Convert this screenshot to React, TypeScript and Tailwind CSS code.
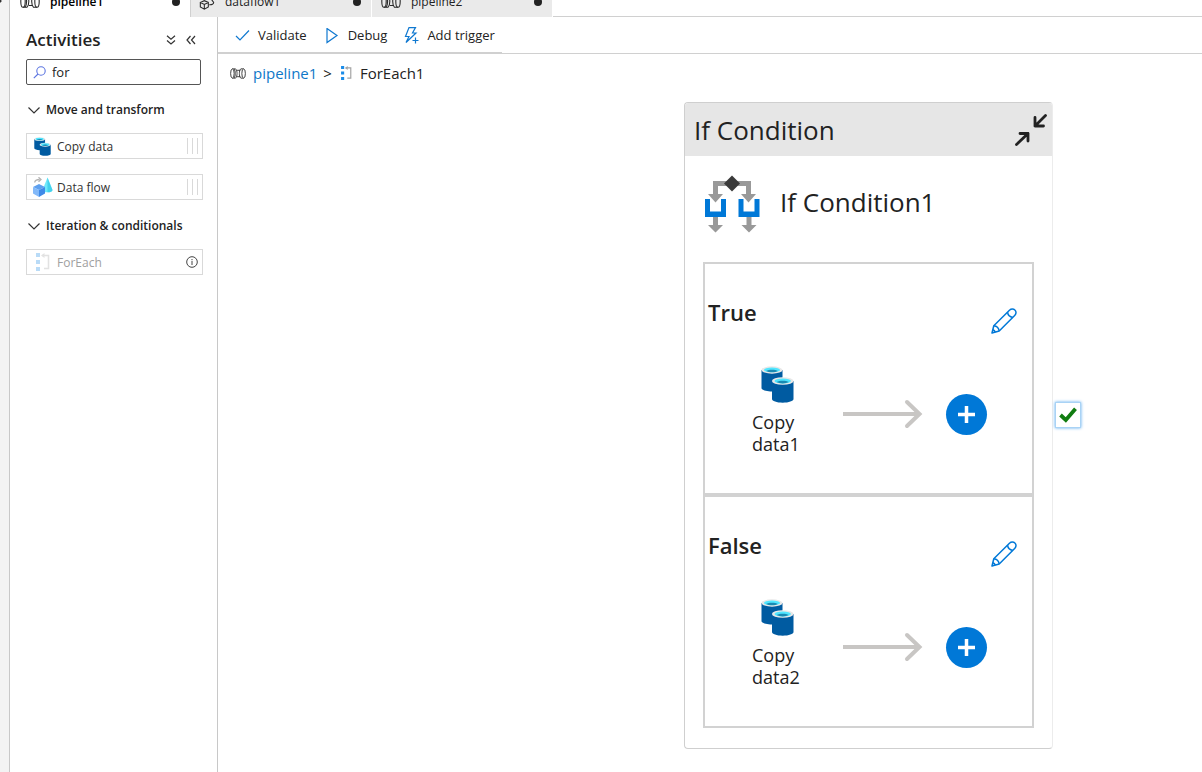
import React, { useState } from "react";

type IconProps = { className?: string };

function PipelineIcon({ className }: IconProps) {
  return (
    <svg viewBox="0 0 20 13" className={className} fill="none" stroke="#2b2b2b" strokeWidth="1.100" aria-hidden="true">
      <path d="M3 .7h4M3 12.300h4" />
      <ellipse cx="3" cy="6.500" rx="2.200" ry="5.800" />
      <path d="M5 .9C6.300 2.300 6.600 4.300 6.600 6.500S6.300 10.700 5 12.100M7 .7c1.400 1.500 1.800 3.500 1.800 5.800S8.400 10.800 7 12.300" />
      <path d="M8.800 2.500h4M8.800 10.500h4" />
      <path d="M17 .7h-3.500c-1.400 1.500-1.800 3.500-1.800 5.800s.4 4.300 1.800 5.800H17" />
      <ellipse cx="17" cy="6.500" rx="2.200" ry="5.800" />
    </svg>
  );
}

function DataflowTabIcon({ className }: IconProps) {
  return (
    <svg viewBox="0 0 18 18" className={className} fill="none" stroke="#2b2b2b" strokeWidth="1.200" aria-hidden="true">
      <path d="M1.500 9.500l4.500-2 4.500 2v5L6 17l-4.500-2.500zM1.500 9.500L6 11.800l4.500-2.300M6 11.800V17" />
      <path d="M11 2l5.500 7.500c0 1.800-2 2.700-5 2.500" />
      <path d="M2 5c.5-2 2-3 4-3M4.500.5L6.500 2l-2 1.800" />
    </svg>
  );
}

function ForEachIcon({ className }: IconProps) {
  return (
    <svg viewBox="0 0 14 18" className={className} aria-hidden="true">
      <path fill="#1a8ce8" d="M0 0h4v4H0zM0 7h4v4H0zM0 14h4v4H0z" />
      <path fill="none" stroke="#a3a3a3" strokeWidth="1.500" d="M6 2.500h6.500v13H8" />
      <path fill="#a3a3a3" d="M5 2.500L8.500 0v5z" />
    </svg>
  );
}

function CopyDataIcon({ className }: IconProps) {
  return (
    <svg viewBox="0 0 33 37" className={className} aria-hidden="true">
      <path fill="#005ba1" d="M.5 4v18c0 2 4.700 3.600 10.500 3.600S21.500 24 21.500 22V4z" />
      <ellipse cx="11" cy="4" rx="10.500" ry="3.700" fill="#e8e8e8" />
      <ellipse cx="11" cy="3.900" rx="8" ry="2.400" fill="#50e6ff" />
      <path fill="#198ab3" d="M5 5c1.600-1 3.600-1.300 6-1.300s4.400.3 6 1.300c-1.500.8-3.500 1.300-6 1.300S6.500 5.800 5 5z" />
      <path fill="#005ba1" d="M11 15v18c0 2 4.700 3.700 10.700 3.700S32.500 35 32.500 33V15z" />
      <ellipse cx="21.700" cy="15" rx="10.800" ry="3.800" fill="#e8e8e8" />
      <ellipse cx="21.700" cy="14.900" rx="8.200" ry="2.500" fill="#50e6ff" />
      <path fill="#198ab3" d="M15.600 16c1.600-1 3.700-1.300 6.100-1.300s4.500.3 6.100 1.300c-1.600.9-3.600 1.400-6.100 1.400s-4.500-.5-6.100-1.400z" />
    </svg>
  );
}

function DataFlowIcon({ className }: IconProps) {
  return (
    <svg viewBox="0 0 20 20" className={className} aria-hidden="true">
      <path fill="#6fe9fb" d="M14.500.5L9.500 13c0 1.500 2.200 2.300 5 2.300s5-.8 5-2.300z" />
      <path fill="#32c8e6" fillOpacity=".7" d="M14.500.5v14.800c2.800 0 5-.8 5-2.300z" />
      <path fill="#5ea0ef" d="M0 10l6-3 6 3-6 3z" />
      <path fill="#83b9f9" d="M0 10l6 3v7l-6-3.400z" />
      <path fill="#3f8ae8" d="M12 10l-6 3v7l6-3.400z" />
      <path fill="none" stroke="#b3b3b3" strokeWidth="1.300" d="M1.700 5.500c.2-2 1.500-3 5-3" />
      <path fill="none" stroke="#b3b3b3" strokeWidth="1.300" d="M5.500.3L8 2.500 5.500 4.700" />
    </svg>
  );
}

function IfConditionIcon({ className }: IconProps) {
  return (
    <svg viewBox="0 0 56 58" className={className} aria-hidden="true">
      <path fill="#999" d="M9 6h38v13h5l-7.500 8.500L37 19h5v-8H14v8h5l-7.500 8.500L4 19h5z" />
      <path fill="#3a3a3a" d="M28 .5l8 8-8 8-8-8z" />
      <path fill="#0078d7" d="M1 24h5v12.500h11V24h5v18H1zM34.500 24h5v12.500h11V24h5v18h-21z" />
      <path fill="#999" d="M9 42h5v8h5l-7.500 7.500L4 50h5zM42.500 42h5v8h5L45 57.500 37.500 50h5z" />
    </svg>
  );
}

function PencilIcon({ className }: IconProps) {
  return (
    <svg viewBox="0 0 26 26" className={className} fill="none" stroke="#0078d7" strokeWidth="1.500" strokeLinejoin="round" aria-hidden="true">
      <path d="M1 25l1.800-7.200L18.700 2a3.600 3.600 0 0 1 5.200 0 3.600 3.600 0 0 1 0 5.200L8.200 23z" />
      <path d="M16.500 4.200c.4 2.800 2.200 4.800 5.300 5.300M2.800 17.800c3 .3 4.900 2.200 5.400 5.200M1.800 21.700c1.300.4 2.100 1.200 2.500 2.500" />
    </svg>
  );
}

function Chevron({ className }: IconProps) {
  return (
    <svg viewBox="0 0 12 7" className={className} fill="none" stroke="#333" strokeWidth="1.200" aria-hidden="true">
      <path d="M.5.5L6 6 11.500.5" />
    </svg>
  );
}

function Grip() {
  return (
    <span className="flex h-4 w-[11px] justify-between" aria-hidden="true">
      <span className="w-px bg-[#d9d9d9]" />
      <span className="w-px bg-[#d9d9d9]" />
      <span className="w-px bg-[#d9d9d9]" />
    </span>
  );
}

function Tab({ label, icon, active }: { label: string; icon: React.ReactNode; active?: boolean }) {
  return (
    <button
      type="button"
      role="tab"
      aria-selected={!!active}
      className={
        active
          ? "flex h-[31px] w-[181px] items-center border-r border-[#d0d0d0] bg-white pl-[10px] pr-[10px] text-xs font-semibold text-black"
          : "flex h-[31px] w-[181px] items-center border-r border-white bg-[#eaeaea] pl-2 pr-[10px] text-xs text-[#222]"
      }
    >
      {icon}
      <span className="ml-[10px]">{label}</span>
      <span className="ml-auto size-2 rounded-full bg-[#222]" />
    </button>
  );
}

function Section({ title, children }: { title: string; children: React.ReactNode }) {
  return (
    <section>
      <h2>
        <button type="button" aria-expanded="true" className="flex h-6 items-center gap-[6px] pl-[2px] text-xs font-semibold text-[#222]">
          <Chevron className="h-[7px] w-3" />
          {title}
        </button>
      </h2>
      <div className="mt-[11px] flex flex-col gap-[15px]">{children}</div>
    </section>
  );
}

function Activity({ label, icon, trailing, disabled }: { label: string; icon: React.ReactNode; trailing: React.ReactNode; disabled?: boolean }) {
  return (
    <button
      type="button"
      disabled={disabled}
      className="flex h-[26px] w-[177px] items-center border border-[#d9d9d9] bg-white pl-[5px] pr-1 text-xs text-[#333] disabled:text-[#a0a0a0]"
    >
      <span className="flex w-[21px] justify-center">{icon}</span>
      <span className="ml-1 pt-px">{label}</span>
      <span className="ml-auto">{trailing}</span>
    </button>
  );
}

function Branch({ title, activity }: { title: string; activity: [string, string] }) {
  return (
    <section className="h-[233px] border-2 border-[#d2d2d2] pt-8">
      <div className="flex h-[38px] items-start justify-between pl-[3px] pr-[15px]">
        <h3 className="text-[22px] leading-8 font-semibold text-[#222]">{title}</h3>
        <button type="button" aria-label={`Edit ${title} activities`} className="self-end">
          <PencilIcon className="size-[26px]" />
        </button>
      </div>
      <div className="mt-8 flex items-center pl-[47px] pr-[45px]">
        <div className="flex w-[51px] flex-col items-center gap-2">
          <CopyDataIcon className="h-[37px] w-[33px]" />
          <p className="w-full text-lg leading-[22px] text-[#222]">
            {activity[0]}
            <br />
            {activity[1]}
          </p>
        </div>
        <svg viewBox="0 0 80 30" className="mt-[6px] ml-10 h-[30px] w-20" fill="none" stroke="#c8c6c4" strokeWidth="4" aria-hidden="true">
          <path d="M0 15h76" />
          <path strokeLinecap="round" d="M64 3l12.500 12L64 27" />
        </svg>
        <button type="button" aria-label={`Add activity to ${title}`} className="mt-2 ml-auto flex size-[41px] items-center justify-center rounded-full bg-[#0078d7]">
          <svg viewBox="0 0 17 17" className="size-[17px]" stroke="#fff" strokeWidth="3.500" aria-hidden="true">
            <path d="M8.500 0v17M0 8.500h17" />
          </svg>
        </button>
      </div>
    </section>
  );
}

export default function App() {
  const [query, setQuery] = useState("for");

  return (
    <div className="flex min-h-screen bg-white font-['Open_Sans','Noto_Sans',sans-serif] text-[#222]">
      <div className="w-[10px] shrink-0 overflow-hidden border-r border-[#c8c8c8] bg-[#f3f3f3]">
        <svg viewBox="0 0 6 10" className="-mt-1 h-[10px] w-[6px] -translate-x-1" fill="none" stroke="#333" strokeWidth="1.300" aria-hidden="true">
          <path d="M1 1l4 4-4 4" />
        </svg>
      </div>

      <div className="flex min-w-0 flex-1 flex-col">
        <header role="tablist" className="flex h-[17px] items-end overflow-hidden">
          <Tab active label="pipeline1" icon={<PipelineIcon className="h-[13px] w-5" />} />
          <Tab label="dataflow1" icon={<DataflowTabIcon className="size-4" />} />
          <Tab label="pipeline2" icon={<PipelineIcon className="ml-px h-[13px] w-5" />} />
          <div className="h-full flex-1 border-b border-[#d0d0d0]" />
        </header>

        <div className="flex flex-1">
          <aside className="w-[208px] shrink-0 border-r border-[#c8c8c8] pl-4">
            <div className="flex h-[42px] items-center pt-1 pr-[21px]">
              <h1 className="text-[17px] leading-6 font-semibold">Activities</h1>
              <button type="button" aria-label="Expand all" className="ml-auto">
                <svg viewBox="0 0 10 10" className="size-[10px]" fill="none" stroke="#333" strokeWidth="1.200" aria-hidden="true">
                  <path d="M1 .8l4 3.500L9 .8M1 5.500L5 9l4-3.500" />
                </svg>
              </button>
              <button type="button" aria-label="Collapse panel" className="ml-[10px]">
                <svg viewBox="0 0 10 10" className="size-[10px]" fill="none" stroke="#333" strokeWidth="1.200" aria-hidden="true">
                  <path d="M4.500 1L1 5l3.500 4M9 1L5.500 5 9 9" />
                </svg>
              </button>
            </div>
            <label className="flex h-[26px] w-[175px] items-center rounded-[2px] border border-[#555] pl-[6px]">
              <svg viewBox="0 0 13 13" className="size-[13px]" fill="none" stroke="#5b74e0" strokeWidth="1.100" aria-hidden="true">
                <circle cx="8" cy="5" r="4.200" />
                <path d="M5 8L.8 12.200" />
              </svg>
              <input
                aria-label="Search activities"
                value={query}
                onChange={(e) => setQuery(e.target.value)}
                className="ml-[6px] min-w-0 flex-1 bg-transparent pt-px text-[13px] outline-none"
              />
            </label>
            <div className="mt-[13px] flex flex-col gap-[14px]">
              <Section title="Move and transform">
                <Activity label="Copy data" icon={<CopyDataIcon className="h-[19px] w-[17px]" />} trailing={<Grip />} />
                <Activity label="Data flow" icon={<DataFlowIcon className="size-5" />} trailing={<Grip />} />
              </Section>
              <Section title="Iteration & conditionals">
                <Activity
                  disabled
                  label="ForEach"
                  icon={<ForEachIcon className="h-[18px] w-[14px] opacity-30" />}
                  trailing={
                    <svg viewBox="0 0 12 12" className="size-3" fill="none" stroke="#444" aria-hidden="true">
                      <circle cx="6" cy="6" r="5.300" />
                      <path d="M6 5v4M6 3v1.200" />
                    </svg>
                  }
                />
              </Section>
            </div>
          </aside>

          <main className="flex min-w-0 flex-1 flex-col">
            <div className="flex h-[37px] items-start border-b border-[#d0d0d0]">
              <div className="flex h-9 items-center border-b border-[#d0d0d0] pt-0.5 pr-[7px] pl-[17px] text-[13px]">
                <button type="button" className="flex items-center gap-2">
                  <svg viewBox="0 0 15 12" className="h-3 w-[15px]" fill="none" stroke="#0f78d0" strokeWidth="1.200" aria-hidden="true">
                    <path d="M1 6L5 10 14 .5" />
                  </svg>
                  Validate
                </button>
                <button type="button" className="ml-[18px] flex items-center gap-[9px]">
                  <svg viewBox="0 0 14 16" className="h-4 w-[14px]" fill="none" stroke="#0f78d0" strokeWidth="1.200" aria-hidden="true">
                    <path d="M2 .5l10 7-10 7z" />
                  </svg>
                  Debug
                </button>
                <button type="button" className="ml-[17px] flex items-center gap-2">
                  <svg viewBox="0 0 15 17" className="h-[17px] w-[15px]" fill="none" stroke="#0f78d0" strokeWidth="1.200" aria-hidden="true">
                    <path d="M5 .6h6.500L8.500 6H12L2 15.500 5 9.500H1.500z" />
                    <path d="M11.500 10.500v6M8.500 13.500h6" />
                  </svg>
                  Add trigger
                </button>
              </div>
            </div>

            <nav aria-label="Breadcrumb" className="flex h-[38px] items-center pl-3 text-[15px]">
              <PipelineIcon className="h-[11px] w-4" />
              <a href="#pipeline1" className="ml-[7px] text-[#0f78c8]">
                pipeline1
              </a>
              <span className="ml-[6px]">&gt;</span>
              <ForEachIcon className="ml-[9px] h-[14px] w-[11px]" />
              <span className="ml-2">ForEach1</span>
            </nav>

            <div className="relative min-h-[680px] flex-1">
              <article className="absolute top-[10px] left-[466px] w-[369px] rounded-[4px] border border-[#cfcfcf] border-r-[#ececec] bg-white">
                <header className="flex h-[53px] items-center justify-between rounded-t-[3px] bg-[#e6e6e6] pr-[5px] pl-[9px]">
                  <h2 className="text-[26px] leading-8">If Condition</h2>
                  <button type="button" aria-label="Collapse">
                    <svg viewBox="0 0 32 32" className="size-8" fill="none" stroke="#222" strokeWidth="2.800" strokeLinecap="round" strokeLinejoin="round" aria-hidden="true">
                      <path d="M30.500 1.500L20 12M20 3.500V12h8.500" />
                      <path d="M1.500 30.500L13 19.500M5 19.500h8V27" />
                    </svg>
                  </button>
                </header>
                <div className="flex items-center px-[19px] pt-[19px] pb-[29px]">
                  <IfConditionIcon className="h-[58px] w-14" />
                  <span className="ml-5 pb-1 text-[26px] leading-8">If Condition1</span>
                </div>
                <div className="px-[18px] pb-5">
                  <Branch title="True" activity={["Copy", "data1"]} />
                  <Branch title="False" activity={["Copy", "data2"]} />
                </div>
                <button
                  type="button"
                  aria-label="On success"
                  className="absolute top-[299px] left-[370px] flex size-[26px] items-center justify-center border border-[#a9d3f5] bg-white shadow-[0_0_3px_#5aa9ee]"
                >
                  <svg viewBox="0 0 18 16" className="h-4 w-[18px]" fill="none" stroke="#107c10" strokeWidth="3.800" aria-hidden="true">
                    <path d="M1.500 8L6.800 13 16.500 1.800" />
                  </svg>
                </button>
              </article>
            </div>
          </main>
        </div>
      </div>
    </div>
  );
}
